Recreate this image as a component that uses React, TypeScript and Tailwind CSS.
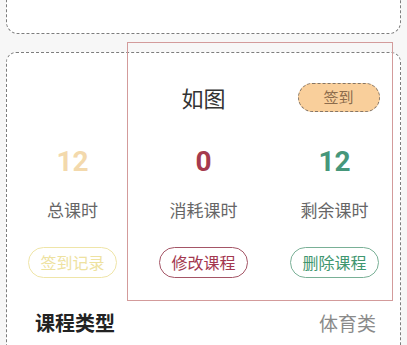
import React from 'react';

const stats = [
  { value: '12', label: '总课时', valueCls: 'text-[#f3d9ac]', btn: '签到记录', btnCls: 'border-[#efe5a8] text-[#eee2a0]' },
  { value: '0', label: '消耗课时', valueCls: 'text-[#a53a4e]', btn: '修改课程', btnCls: 'border-[#a45566] text-[#a3384f]' },
  { value: '12', label: '剩余课时', valueCls: 'text-[#46977a]', btn: '删除课程', btnCls: 'border-[#79b096] text-[#3f9770]' },
];

export default function App() {
  return (
    <div className="relative w-[407px] h-[345px] overflow-hidden bg-[#f7f7f7] font-['Noto_Sans_CJK_SC','Noto_Sans',sans-serif]">
      <div className="-mt-[42px] px-[6px] flex flex-col gap-[18px]">
        {/* previous card, mostly scrolled away */}
        <div className="h-[76px] rounded-[12px] border border-dashed border-[#7d7d7d] bg-white flex justify-between px-[34px] pt-[19px]">
          <span className="text-[17px] leading-[22px] text-[#555]">上课时间安排</span>
          <span className="text-[17px] leading-[22px] text-[#555]">每周六 上午</span>
        </div>

        {/* course card */}
        <div className="h-[330px] rounded-[10px] border border-dashed border-[#7d7d7d] bg-white pt-[29px]">
          <div className="grid grid-cols-3 items-center h-[30px]">
            <div />
            <div className="text-center text-[22px] leading-[30px] text-[#333]">如图</div>
            <div className="flex justify-center pl-[8px]">
              <span className="w-[82px] h-[29px] rounded-full border-[1.5px] border-dashed border-[#857565] bg-[#f9cf9b] text-[#8c6c4c] text-[15px] leading-[26px] text-center">
                签到
              </span>
            </div>
          </div>

          <div className="grid grid-cols-3 mt-[34px]">
            {stats.map((s) => (
              <div key={s.label} className="flex flex-col items-center">
                <span className={`text-[28px] leading-[32px] font-bold font-['Roboto',sans-serif] ${s.valueCls}`}>{s.value}</span>
                <span className="mt-[21px] text-[17px] leading-[22px] text-[#666]">{s.label}</span>
                <span className={`mt-[26px] w-[89px] h-[31px] rounded-full border-[1.5px] text-[16px] leading-[28px] text-center ${s.btnCls}`}>
                  {s.btn}
                </span>
              </div>
            ))}
          </div>

          <div className="flex justify-between items-center mt-[31px] pl-[28px] pr-[24px] h-[28px]">
            <span className="text-[20px] font-bold text-[#222]">课程类型</span>
            <span className="text-[19px] text-[#8a8a8a]">体育类</span>
          </div>
        </div>
      </div>

      {/* annotation box */}
      <div className="absolute left-[127px] top-[42px] w-[266px] h-[259px] border-[1.5px] border-[#d39b9b] pointer-events-none" />
    </div>
  );
}
